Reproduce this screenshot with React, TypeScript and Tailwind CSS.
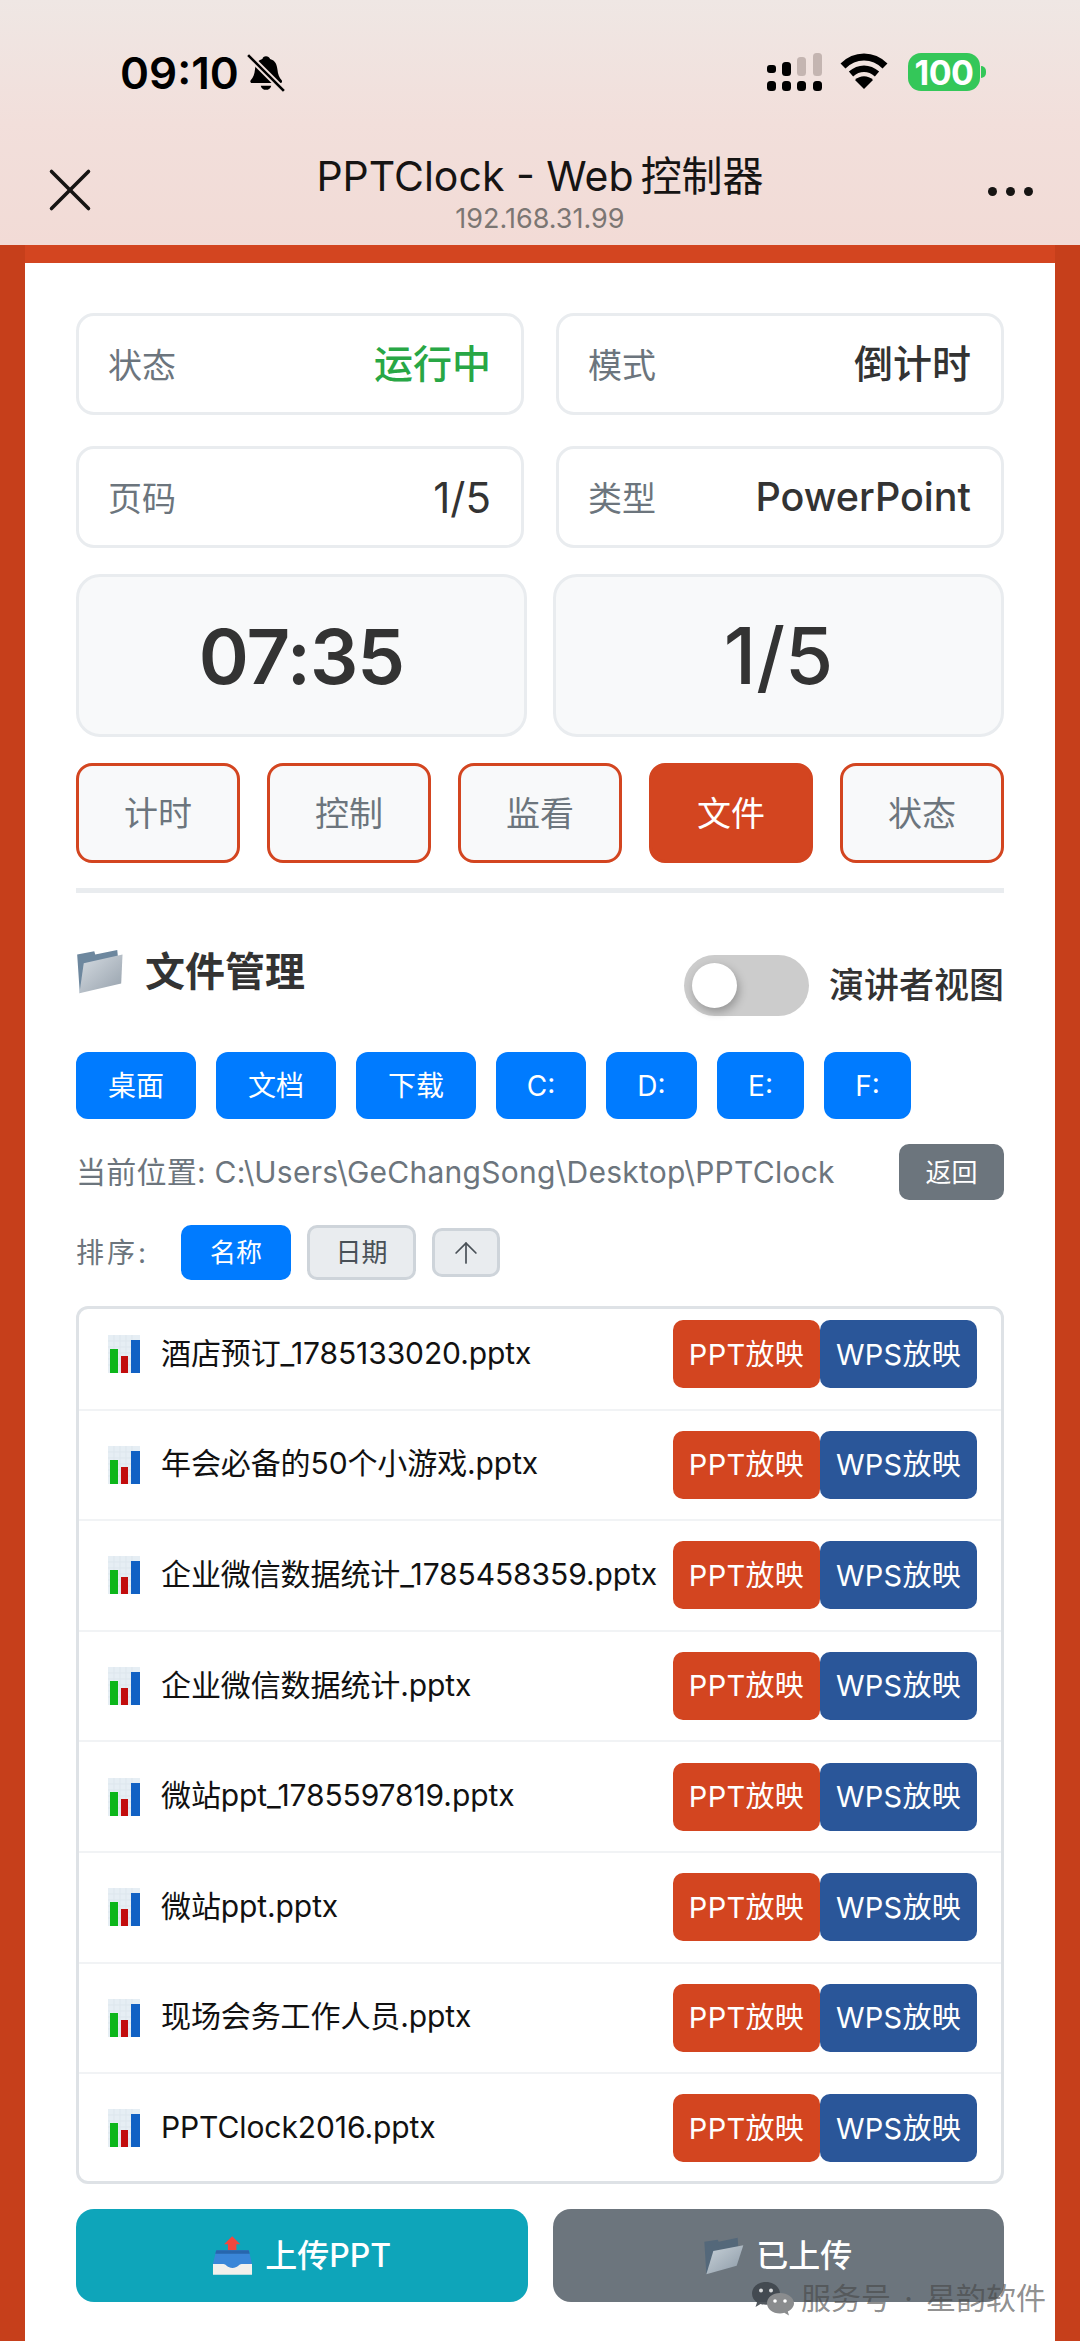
import { ArrowUp, X } from "lucide-react"

const files = [
  "酒店预订_1785133020.pptx",
  "年会必备的50个小游戏.pptx",
  "企业微信数据统计_1785458359.pptx",
  "企业微信数据统计.pptx",
  "微站ppt_1785597819.pptx",
  "微站ppt.pptx",
  "现场会务工作人员.pptx",
  "PPTClock2016.pptx",
]

const tabs = ["计时", "控制", "监看", "文件", "状态"]

const places = [
  { label: "桌面", width: "w-[120px]" },
  { label: "文档", width: "w-[120px]" },
  { label: "下载", width: "w-[120px]" },
  { label: "C:", width: "w-[90px]" },
  { label: "D:", width: "w-[91px]" },
  { label: "E:", width: "w-[87px]" },
  { label: "F:", width: "w-[87px]" },
]

function BellSlash() {
  return (
    <svg width="38" height="40" viewBox="0 0 36 38">
      <path d="M18 3c-2 0-3 1-3.400 2.600C9.500 7 8 11 7.500 16c-.4 4-1.500 7-4 10-.8 1-.3 2.500 1.200 2.500h27c1.500 0 2-1.500 1.200-2.500-2.500-3-3.600-6-4-10-.5-5-2-9-7-10.400C21 4 20 3 18 3z" fill="#000" />
      <path d="M13 31h10c-.5 2.500-2.500 4-5 4s-4.500-1.500-5-4z" fill="#000" />
      <path d="M1 2l34 34" stroke="#f1e0dc" strokeWidth="6" />
      <path d="M1 2l34 34" stroke="#000" strokeWidth="2.500" />
    </svg>
  )
}

function Signal() {
  return (
    <svg width="55" height="38" viewBox="0 0 55 38">
      <rect x="0" y="12" width="9" height="8" rx="3" fill="#000" />
      <rect x="15" y="9" width="9" height="14" rx="3.500" fill="#000" />
      <rect x="30" y="4" width="9" height="19" rx="3.500" fill="#c4b5b1" />
      <rect x="46" y="0" width="9" height="23" rx="3.500" fill="#c4b5b1" />
      <rect x="0" y="28" width="9" height="10" rx="3.500" fill="#000" />
      <rect x="15" y="28" width="9" height="10" rx="3.500" fill="#000" />
      <rect x="30" y="28" width="9" height="10" rx="3.500" fill="#000" />
      <rect x="46" y="28" width="9" height="10" rx="3.500" fill="#000" />
    </svg>
  )
}

function Wifi() {
  return (
    <svg width="48" height="36" viewBox="0 0 48 36">
      <path d="M3 13C15 1 33 1 45 13" fill="none" stroke="#000" strokeWidth="7" />
      <path d="M11 21c8-7 18-7 26 0" fill="none" stroke="#000" strokeWidth="6.500" />
      <path d="M15 27c5-5 13-5 18 0l-9 9z" fill="#000" />
    </svg>
  )
}

function ChartIcon() {
  return (
    <svg width="32" height="38" viewBox="0 0 32 38" className="shrink-0">
      <rect width="32" height="38" fill="#e6eef4" />
      <path d="M0 6h32M0 12h32M0 18h32M0 24h32M0 30h32M6 0v38M12 0v38M18 0v38M24 0v38" stroke="#dde6ed" strokeWidth="1" />
      <rect x="2" y="14" width="8" height="24" fill="#0cb61a" />
      <rect x="13" y="21" width="7" height="17" fill="#c20d0d" />
      <rect x="23" y="5" width="9" height="33" fill="#1161c4" />
    </svg>
  )
}

function FolderIcon() {
  return (
    <svg width="48" height="46" viewBox="55 55 145 140">
      <defs>
        <linearGradient id="folderFront" x1="0" y1="0" x2="1" y2="1">
          <stop offset="0" stopColor="#d6dce2" />
          <stop offset="1" stopColor="#96a1ac" />
        </linearGradient>
      </defs>
      <path d="M58 72L110 62L113 72L180 58L184 100L66 190Z" fill="#6d879e" />
      <path d="M78 98L196 72L192 160L65 190Z" fill="url(#folderFront)" />
    </svg>
  )
}

function OpenFolderIcon() {
  return (
    <svg width="40" height="38" viewBox="78 140 118 114">
      <defs>
        <linearGradient id="openFront" x1="0" y1="0" x2="1" y2="1">
          <stop offset="0" stopColor="#c9d2d9" />
          <stop offset="1" stopColor="#8b99a6" />
        </linearGradient>
      </defs>
      <path d="M78 154L118 148L121 154L178 142L180 172L84 250Z" fill="#54687a" />
      <path d="M105 182L195 165L175 226L84 252Z" fill="url(#openFront)" />
    </svg>
  )
}

function UploadTrayIcon() {
  return (
    <svg width="41" height="41" viewBox="65 135 126 125">
      <path d="M127 138L152 163H140V182H114V163H102Z" fill="#f2473f" />
      <path d="M78 181H178L188 224V240H68V224Z" fill="#3a86d8" />
      <path d="M78 181H178L181 192H75Z" fill="#2766ad" />
      <path d="M68 224H100C108 224 112 236 128 236C144 236 148 224 156 224H188V257H68Z" fill="#f2f0ec" />
    </svg>
  )
}

function WechatMark() {
  return (
    <svg width="42" height="34" viewBox="0 0 42 34" className="shrink-0">
      <path d="M14 0C6 0 0 5 0 11.500c0 3.700 2 7 5 9l-1.500 4.500 5-3c1.800.5 3.600.8 5.500.8 8 0 14-5.300 14-11.300S22 0 14 0z" fill="#3f464c" fillOpacity="0.9" />
      <path d="M28 11c-7.500 0-13 4.600-13 10.200 0 5.600 5.500 10.200 13 10.200 1.500 0 3-.2 4.300-.6l4.700 2.700-1.200-4c3.700-1.900 6.200-4.900 6.200-8.300C42 15.600 35.500 11 28 11z" fill="#8a8c8e" />
      <circle cx="9" cy="8.500" r="2" fill="#fff" fillOpacity="0.8" />
      <circle cx="19" cy="8.500" r="2" fill="#fff" fillOpacity="0.8" />
      <circle cx="23" cy="19" r="1.800" fill="#fff" />
      <circle cx="33" cy="19" r="1.800" fill="#fff" />
    </svg>
  )
}

function InfoCard({ label, value, valueClass }: { label: string; value: string; valueClass: string }) {
  return (
    <div className="flex h-[102px] items-center justify-between rounded-[18px] border-[3px] border-[#e9ecef] bg-white pl-[29px] pr-[30px]">
      <span className="pt-[2px] text-[34px] text-[#6c757d]">{label}</span>
      <span className={valueClass}>{value}</span>
    </div>
  )
}

export default function App() {
  return (
    <div className="relative h-[2341px] w-[1080px] overflow-hidden bg-[#c63f1b] font-[family-name:'Inter','Noto_Sans_CJK_SC',sans-serif]">
      {/* barra superior */}
      <header className="h-[245px] bg-gradient-to-b from-[#efe7e4] via-[#f2dfdb] to-[#f2dbd6] text-black">
        <div className="flex h-[100px] items-start justify-between pl-[120px] pr-[94px] pt-[53px]">
          <div className="flex items-center gap-[8px]">
            <span className="text-[44px] font-semibold leading-[40px]">09:10</span>
            <BellSlash />
          </div>
          <div className="flex items-start">
            <Signal />
            <div className="ml-[18px]">
              <Wifi />
            </div>
            <div className="ml-[20px] flex h-[38px] w-[72px] items-center justify-center rounded-[13px] bg-[#34c759] text-[34px] font-bold tracking-[-0.500px] text-white">
              100
            </div>
            <div className="ml-[1px] mt-[13px] h-[12px] w-[5px] rounded-r-full bg-[#34c759]" />
          </div>
        </div>
        <div className="relative flex flex-col items-center pt-[50px]">
          <div className="flex h-[52px] items-center gap-[7px] text-[41px] leading-none text-[#161413]">
            <span>PPTClock - Web</span>
            <span>控制器</span>
          </div>
          <div className="mt-[2px] text-[27px] leading-[30px] text-[#7b7673]">192.168.31.99</div>
          <X className="absolute left-[33px] top-[53px]" size={74} strokeWidth={1.150} color="#161413" />
          <div className="absolute left-[988px] top-[87px] flex gap-[9px]">
            <span className="h-[9px] w-[9px] rounded-full bg-[#161413]" />
            <span className="h-[9px] w-[9px] rounded-full bg-[#161413]" />
            <span className="h-[9px] w-[9px] rounded-full bg-[#161413]" />
          </div>
        </div>
      </header>

      <main className="mx-[25px] h-[2096px] border-t-[18px] border-[#d34520] bg-white px-[51px] pt-[50px]">
        <div className="grid grid-cols-2 gap-x-[32px] gap-y-[31px]">
          <InfoCard label="状态" value="运行中" valueClass="text-[39px] font-medium text-[#28a745]" />
          <InfoCard label="模式" value="倒计时" valueClass="text-[39px] font-medium text-[#333333]" />
          <InfoCard label="页码" value="1/5" valueClass="pt-[1px] text-[42px] text-[#333333]" />
          <InfoCard label="类型" value="PowerPoint" valueClass="pt-[1px] text-[39.500px] font-medium text-[#333333]" />
        </div>

        <div className="mt-[26px] grid grid-cols-2 gap-x-[26px]">
          <div className="flex h-[163px] items-center justify-center rounded-[24px] border-[3px] border-[#e9ecef] bg-[#f8f9fa] text-[76px] font-semibold tracking-[-1px] text-[#333333]">
            07:35
          </div>
          <div className="flex h-[163px] items-center justify-center rounded-[24px] border-[3px] border-[#e9ecef] bg-[#f8f9fa] text-[78px] font-medium text-[#333333]">
            1/5
          </div>
        </div>

        <div className="mt-[26px] grid grid-cols-5 gap-x-[27px]">
          {tabs.map((tab) => (
            <div
              key={tab}
              className={
                tab === "文件"
                  ? "flex h-[100px] items-center justify-center rounded-[16px] border-[3px] border-[#d34520] bg-[#d34520] text-[34px] text-white"
                  : "flex h-[100px] items-center justify-center rounded-[16px] border-[3px] border-[#d34520] bg-[#f8f9fa] text-[34px] text-[#6c757d]"
              }
            >
              {tab}
            </div>
          ))}
        </div>

        <div className="mt-[25px] h-[5px] bg-[#e9ecef]" />

        {/* gestão de arquivos */}
        <div className="mt-[56px] flex h-[67px] items-start justify-between">
          <div className="flex items-center gap-[21px]">
            <FolderIcon />
            <span className="text-[40px] font-semibold leading-[46px] text-[#333333]">文件管理</span>
          </div>
          <div className="mt-[6px] flex items-center gap-[20px]">
            <div className="relative h-[61px] w-[125px] rounded-full bg-[#cccccc]">
              <span className="absolute left-[8px] top-[8px] h-[45px] w-[45px] rounded-full bg-white shadow-[2px_4px_10px_rgba(0,0,0,0.28)]" />
            </div>
            <span className="text-[35px] font-medium text-[#333333]">演讲者视图</span>
          </div>
        </div>

        <div className="mt-[36px] flex gap-[20px]">
          {places.map((place) => (
            <div key={place.label} className={`flex h-[67px] items-center justify-center rounded-[12px] bg-[#007bff] text-[28px] text-white ${place.width}`}>
              {place.label}
            </div>
          ))}
        </div>

        <div className="mt-[25px] flex h-[56px] items-center justify-between">
          <span className="text-[30px] tracking-[0.250px] text-[#6c757d]">当前位置: C:\Users\GeChangSong\Desktop\PPTClock</span>
          <div className="flex h-[56px] w-[105px] items-center justify-center rounded-[10px] bg-[#6c757d] text-[26px] text-white">返回</div>
        </div>

        <div className="mt-[25px] flex h-[55px] items-center">
          <span className="w-[105px] text-[28px] tracking-[3px] text-[#6c757d]">排序:</span>
          <div className="flex h-[55px] w-[110px] items-center justify-center rounded-[10px] bg-[#007bff] text-[26px] text-white">名称</div>
          <div className="ml-[16px] flex h-[55px] w-[109px] items-center justify-center rounded-[10px] border-[3px] border-[#ced4da] bg-[#e9ecef] text-[26px] text-[#495057]">日期</div>
          <div className="ml-[16px] flex h-[49px] w-[68px] items-center justify-center rounded-[10px] border-[3px] border-[#ced4da] bg-[#e9ecef] text-[#495057]">
            <ArrowUp size={34} strokeWidth={1.200} />
          </div>
        </div>

        <div className="mt-[26px] h-[878px] overflow-hidden rounded-[12px] border-[3px] border-[#dee2e6] bg-white">
          <div className="-mt-[9px]">
            {files.map((file) => (
              <div key={file} className="flex h-[110.600px] items-center border-b-2 border-[#f1f3f5] pl-[29px] pr-[24px]">
                <ChartIcon />
                <span className="ml-[21px] flex-1 whitespace-nowrap pb-[2px] text-[30px] tracking-[-0.100px] text-[#111111]">{file}</span>
                <div className="flex h-[68px] w-[147px] items-center justify-center rounded-[10px] bg-[#d34520] text-[29px] tracking-[0.300px] text-white">PPT放映</div>
                <div className="flex h-[68px] w-[157px] items-center justify-center rounded-[10px] bg-[#2a5699] text-[29px] tracking-[0.300px] text-white">WPS放映</div>
              </div>
            ))}
          </div>
        </div>

        <div className="mt-[25px] grid grid-cols-2 gap-x-[25px]">
          <div className="flex h-[93px] items-center justify-center gap-[12px] rounded-[18px] bg-[#0ea5ba] text-[32px] font-medium text-white">
            <UploadTrayIcon />
            上传PPT
          </div>
          <div className="flex h-[93px] items-center justify-center gap-[12px] rounded-[18px] bg-[#6c757d] text-[32px] font-medium text-white">
            <OpenFolderIcon />
            已上传
          </div>
        </div>
      </main>

      {/* marca d'água */}
      <div className="absolute left-[752px] top-[2276px] flex items-center text-[30px] text-[rgba(70,70,70,0.62)]">
        <WechatMark />
        <span className="ml-[7px]">服务号</span>
        <span className="w-[35px] text-center">·</span>
        <span>星韵软件</span>
      </div>
    </div>
  )
}
